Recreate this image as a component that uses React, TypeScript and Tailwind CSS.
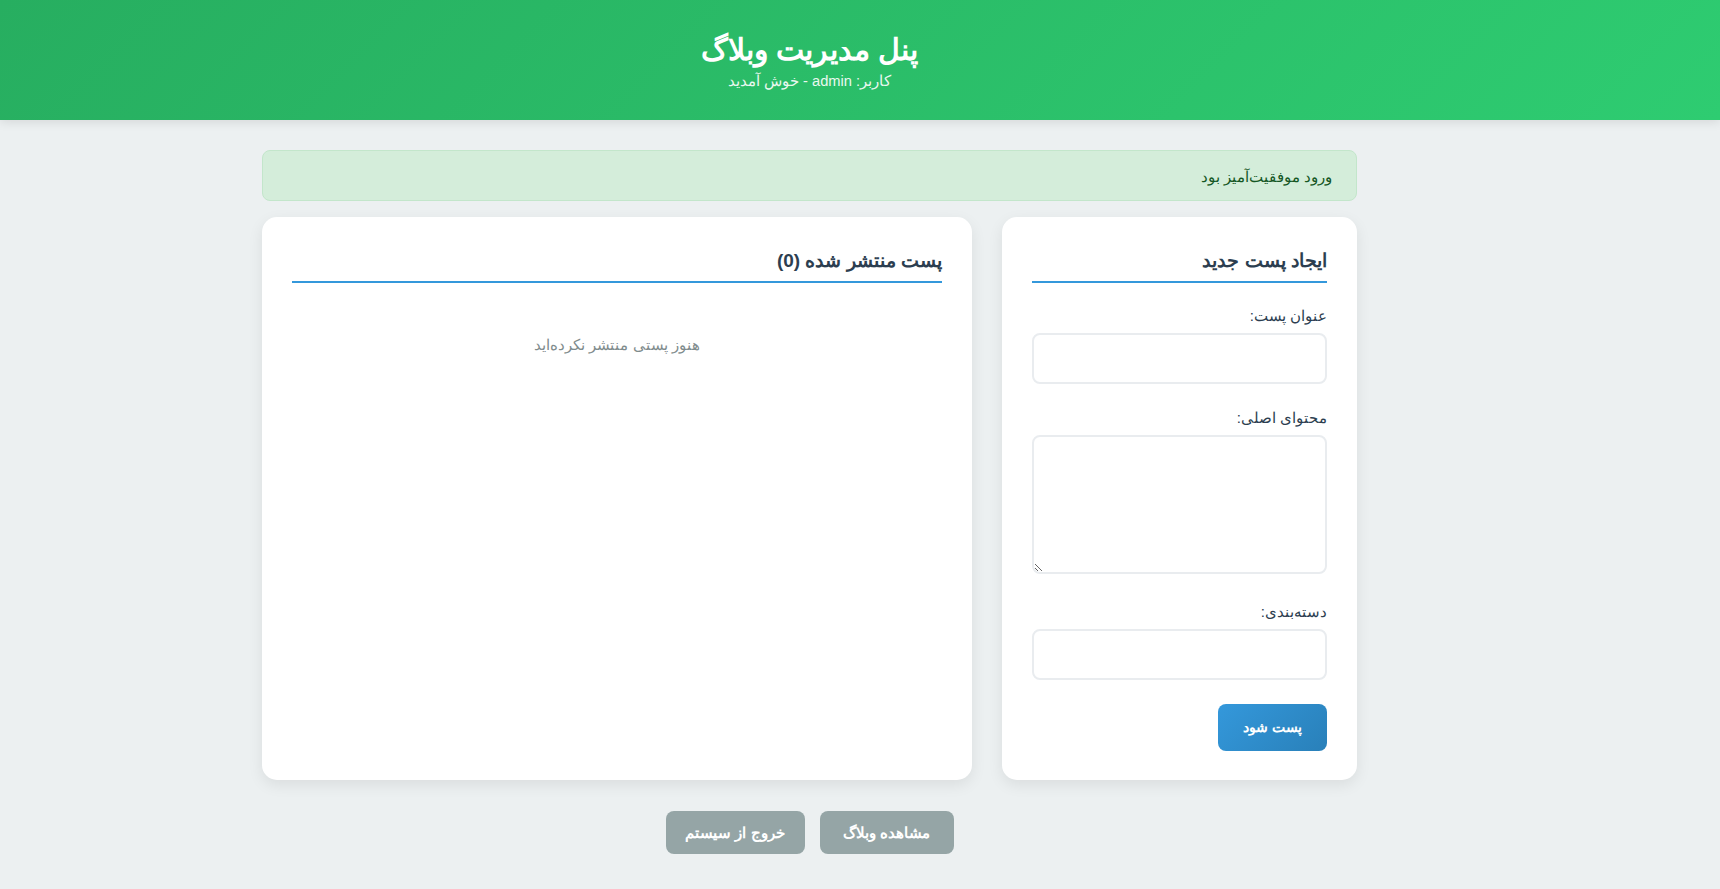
import React from "react";

export default function App() {
  return (
    <div dir="rtl" className="min-h-[889px] bg-[#ecf0f1] font-['Liberation_Sans',sans-serif] text-[#2c3e50]">
      <header className="h-[120px] w-full bg-[linear-gradient(135deg,#27ae60,#2ecc71)] shadow-[0_2px_10px_rgba(0,0,0,0.1)]">
        <div className="mr-auto w-[1619px] pt-[30px] text-center text-white">
          <h1 className="text-[30px] font-bold leading-[40px]">پنل مدیریت وبلاگ</h1>
          <p className="pt-[1px] text-[14.7px] leading-[21px] opacity-90">کاربر: admin - خوش آمدید</p>
        </div>
      </header>

      <div className="mr-auto w-[1619px]">
        <main className="mx-auto w-[1095px] pt-[30px]">
          <div className="mb-[16px] rounded-[8px] border border-[#c3e6cb] bg-[#d4edda] px-[24px] pt-[16px] pb-[14px] text-[15px] leading-[19px] text-[#155724]">
            ورود موفقیت‌آمیز بود
          </div>

          <div className="grid grid-cols-[1fr_2fr] gap-[30px]">
            <section className="h-[563px] rounded-[15px] bg-white p-[30px] shadow-[0_5px_15px_rgba(0,0,0,0.08)]">
              <h2 className="mb-[19px] border-b-2 border-[#3498db] pb-[6px] text-[19px] font-bold leading-[28px]">ایجاد پست جدید</h2>
              <div className="mb-[20px]">
                <label className="mb-[6px] block pt-[2px] text-[15px] leading-[23px]">عنوان پست:</label>
                <input type="text" className="block h-[51px] w-full rounded-[8px] border-2 border-[#e9ecef] bg-white px-[12px] outline-none" />
              </div>
              <div className="mb-[24px]">
                <label className="mb-[6px] block pt-[2px] text-[15px] leading-[23px]">محتوای اصلی:</label>
                <textarea className="block h-[139px] w-full rounded-[8px] border-2 border-[#e9ecef] bg-white px-[12px] outline-none" />
              </div>
              <div className="mb-[24px]">
                <label className="mb-[6px] block pt-[2px] text-[15px] leading-[23px]">دسته‌بندی:</label>
                <input type="text" className="block h-[51px] w-full rounded-[8px] border-2 border-[#e9ecef] bg-white px-[12px] outline-none" />
              </div>
              <button className="h-[47px] w-[109px] rounded-[8px] bg-[linear-gradient(135deg,#3498db,#2980b9)] text-[14px] font-bold text-white">
                پست شود
              </button>
            </section>

            <section className="h-[563px] rounded-[15px] bg-white p-[30px] shadow-[0_5px_15px_rgba(0,0,0,0.08)]">
              <h2 className="mb-[19px] border-b-2 border-[#3498db] pb-[6px] text-[19px] font-bold leading-[28px]">پست منتشر شده (0)</h2>
              <p className="pt-[31px] text-center text-[15px] leading-[24px] text-[#7f8c8d]">هنوز پستی منتشر نکرده‌اید</p>
            </section>
          </div>

          <div className="mt-[31px] flex justify-center gap-[15px]">
            <button className="h-[43px] w-[134px] rounded-[8px] bg-[#95a5a6] pt-[1px] text-[15px] font-bold text-white">مشاهده وبلاگ</button>
            <button className="h-[43px] w-[139px] rounded-[8px] bg-[#95a5a6] pt-[1px] text-[15px] font-bold text-white">خروج از سیستم</button>
          </div>
        </main>
      </div>
    </div>
  );
}
